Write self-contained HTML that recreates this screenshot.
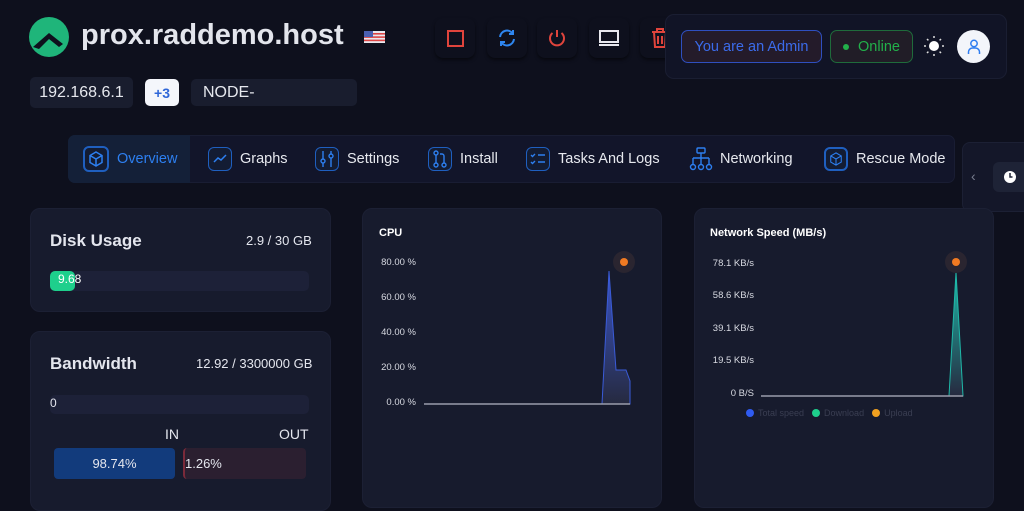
<!DOCTYPE html>
<html><head><meta charset="utf-8"><style>
*{box-sizing:border-box;margin:0;padding:0}
body{width:1024px;height:504px;overflow:hidden;background:#0e101d;font-family:"Liberation Sans",sans-serif;color:#e4e6ee;position:relative}
.abs{position:absolute}
.card{position:absolute;background:#171b2d;border-radius:10px;border:1px solid #1c2034}
.btn{position:absolute;top:18px;width:40px;height:40px;border-radius:8px;background:#0e101d;box-shadow:0 2px 3px rgba(0,0,0,.5);display:flex;align-items:center;justify-content:center}
.pill{position:absolute;border-radius:5px;background:#191d2e;font-size:16px;color:#e6e8ee;display:flex;align-items:center}
.tab{position:absolute;top:135px;height:48px;display:flex;align-items:center;font-size:14.5px;color:#e6e8ee}
.ic{width:24px;height:24px;border:1.5px solid #1f5fbf;border-radius:6px;margin-right:8px;display:flex;align-items:center;justify-content:center;background:#131c33}
.yl{position:absolute;font-size:9.5px;color:#d8dae2;text-align:right}
</style></head><body>
<svg class="abs" style="left:29px;top:17px" width="40" height="40" viewBox="0 0 40 40"><circle cx="20" cy="20" r="20" fill="#1fb57a"/><path d="M4 30 L20 16 L34 27 L30 30 L20 22 L10 32Z" fill="#0e101d"/></svg>
<div class="abs" style="left:81px;top:19px;font-size:29px;font-weight:bold;color:#e3e5ec">prox.raddemo.host</div>
<svg class="abs" style="left:364px;top:31px" width="21" height="12"><rect width="21" height="12" fill="#e8e8ee"/><rect y="2" width="21" height="1.6" fill="#d44"/><rect y="5.3" width="21" height="1.6" fill="#d44"/><rect y="8.6" width="21" height="1.6" fill="#d44"/><rect width="9" height="6" fill="#4a5fb0"/></svg>
<div class="btn" style="left:435px"><div style="width:17px;height:17px;border:2px solid #e0443c"></div></div>
<div class="btn" style="left:487px"><svg width="20" height="20" viewBox="0 0 20 20" fill="none" stroke="#2e86f0" stroke-width="2"><path d="M3 9a7 7 0 0 1 13-3M17 11a7 7 0 0 1-13 3"/><path d="M16 2v4h-4M4 18v-4h4"/></svg></div>
<div class="btn" style="left:537px"><svg width="20" height="20" viewBox="0 0 20 20" fill="none" stroke="#e0443c" stroke-width="2"><path d="M10 2v7"/><path d="M5.5 5a7 7 0 1 0 9 0"/></svg></div>
<div class="btn" style="left:589px"><svg width="22" height="20" viewBox="0 0 22 20" fill="none" stroke="#e8e8ee" stroke-width="2"><rect x="2" y="3" width="18" height="11"/><path d="M1 17h20"/></svg></div>
<div class="btn" style="left:640px"><svg width="20" height="22" viewBox="0 0 20 22" fill="none" stroke="#e0443c" stroke-width="2"><path d="M2 5h16M7 5V2h6v3M4 5l1 15h10l1-15M8 9v8M12 9v8"/></svg></div>
<div class="abs" style="left:665px;top:14px;width:342px;height:65px;background:#111426;border:1px solid #1a1e32;border-radius:9px"></div>
<div class="abs" style="left:681px;top:30px;width:141px;height:33px;border:1px solid #2f4fbf;border-radius:7px;background:#241b2a;color:#3b6bea;font-size:14.5px;display:flex;align-items:center;justify-content:center">You are an Admin</div>
<div class="abs" style="left:830px;top:30px;width:83px;height:33px;border:1px solid #1f6b3b;border-radius:7px;background:#211d27;color:#22b04a;font-size:14.5px;display:flex;align-items:center;justify-content:center"><span style="width:6px;height:6px;border-radius:3px;background:#22b04a;margin-right:9px"></span>Online</div>
<svg class="abs" style="left:924px;top:36px" width="20" height="20" viewBox="0 0 20 20"><circle cx="10" cy="10" r="5" fill="#fff"/><g stroke="#ddd" stroke-width="1.5"><path d="M10 0v2M10 18v2M0 10h2M18 10h2M3 3l1.4 1.4M15.6 15.6L17 17M3 17l1.4-1.4M15.6 4.4L17 3"/></g></svg>
<div class="abs" style="left:957px;top:30px;width:33px;height:33px;border-radius:50%;background:#f3f5fa;display:flex;align-items:center;justify-content:center"><svg width="14" height="16" viewBox="0 0 14 16" fill="none" stroke="#2e7df0" stroke-width="1.5"><circle cx="7" cy="4.5" r="3.2"/><path d="M1.5 15v-2a4 4 0 0 1 4-4h3a4 4 0 0 1 4 4v2"/></svg></div>
<div class="pill" style="left:30px;top:77px;width:103px;height:31px;justify-content:center">192.168.6.1</div>
<div class="pill" style="left:145px;top:79px;width:34px;height:27px;background:#f4f6fb;color:#2f66d8;font-weight:bold;font-size:14px;justify-content:center">+3</div>
<div class="pill" style="left:191px;top:79px;width:166px;height:27px;padding-left:12px">NODE-</div>
<div class="abs" style="left:68px;top:135px;width:887px;height:48px;background:#12152a;border:1px solid #191d33;border-radius:7px"></div>
<div class="abs" style="left:68px;top:135px;width:122px;height:48px;background:#142038;border-radius:7px 0 0 7px"></div>
<div class="tab" style="left:83px;color:#2d7ff0"><div class="ic" style="width:26px;height:26px;border-width:2px"><svg width="16" height="16" viewBox="0 0 16 16" fill="none" stroke="#2d7ff0" stroke-width="1.5"><path d="M8 1l6 3.5v7L8 15 2 11.5v-7z M2 4.5L8 8l6-3.5M8 8v7"/></svg></div>Overview</div>
<div class="tab" style="left:208px"><div class="ic"><svg width="14" height="10" viewBox="0 0 14 10" fill="none" stroke="#2d7ff0" stroke-width="1.5"><path d="M1 8l4-4 3 2 5-5"/></svg></div>Graphs</div>
<div class="tab" style="left:315px"><div class="ic"><svg width="16" height="18" viewBox="0 0 16 18" fill="none" stroke="#2d7ff0" stroke-width="1.4"><path d="M4 1v8M4 13v4M12 1v3M12 8v9"/><circle cx="4" cy="11" r="2"/><circle cx="12" cy="6" r="2"/></svg></div>Settings</div>
<div class="tab" style="left:428px"><div class="ic"><svg width="16" height="18" viewBox="0 0 16 18" fill="none" stroke="#2d7ff0" stroke-width="1.4"><circle cx="4" cy="3" r="2"/><circle cx="4" cy="15" r="2"/><circle cx="12" cy="15" r="2"/><path d="M4 5v8M12 13V6a2 2 0 0 0-2-2H8"/></svg></div>Install</div>
<div class="tab" style="left:526px"><div class="ic"><svg width="16" height="14" viewBox="0 0 16 14" fill="none" stroke="#2d7ff0" stroke-width="1.4"><path d="M1 3l1.5 1.5L5 2M8 3h7M1 10l1.5 1.5L5 9M8 10h7"/></svg></div>Tasks And Logs</div>
<div class="tab" style="left:689px"><svg width="24" height="24" viewBox="0 0 24 24" fill="none" stroke="#2d7ff0" stroke-width="1.4" style="margin-right:7px"><rect x="8" y="1" width="8" height="5" rx="1"/><path d="M12 6v5M4 11h16M4 11v6M12 11v6M20 11v6"/><circle cx="4" cy="20" r="2.5"/><circle cx="12" cy="20" r="2.5"/><circle cx="20" cy="20" r="2.5"/></svg>Networking</div>
<div class="tab" style="left:824px"><div class="ic" style="width:24px;height:24px;border-width:2px"><svg width="14" height="14" viewBox="0 0 16 16" fill="none" stroke="#2d7ff0" stroke-width="1.2"><path d="M8 1l6 3.5v7L8 15 2 11.5v-7z M2 4.5L8 8l6-3.5M8 8v7"/></svg></div>Rescue Mode</div>
<div class="abs" style="left:962px;top:142px;width:70px;height:70px;background:#141729;border:1px solid #1c2034;border-radius:8px 0 0 8px"></div>
<div class="abs" style="left:971px;top:168px;color:#7a7f90;font-size:14px">&lsaquo;</div>
<div class="abs" style="left:993px;top:162px;width:40px;height:30px;background:#1e2336;border-radius:6px"></div>
<svg class="abs" style="left:1003px;top:170px" width="14" height="14"><circle cx="7" cy="7" r="6" fill="#fff"/><path d="M7 3v4h2.5" stroke="#1e2336" stroke-width="1.5" fill="none"/></svg>
<div class="card" style="left:30px;top:208px;width:301px;height:104px"></div>
<div class="abs" style="left:50px;top:231px;font-size:17px;font-weight:bold">Disk Usage</div>
<div class="abs" style="left:246px;top:233px;font-size:13px">2.9 / 30 GB</div>
<div class="abs" style="left:50px;top:271px;width:259px;height:20px;background:#1d2138;border-radius:5px"></div>
<div class="abs" style="left:50px;top:271px;width:25px;height:20px;background:#1ecf8c;border-radius:5px"></div>
<div class="abs" style="left:58px;top:272px;font-size:12px;color:#fff">9.68</div>
<div class="card" style="left:30px;top:331px;width:301px;height:180px"></div>
<div class="abs" style="left:50px;top:354px;font-size:17px;font-weight:bold">Bandwidth</div>
<div class="abs" style="left:196px;top:356px;font-size:13px">12.92 / 3300000 GB</div>
<div class="abs" style="left:50px;top:395px;width:259px;height:19px;background:#1d2138;border-radius:5px"></div>
<div class="abs" style="left:50px;top:396px;font-size:12px">0</div>
<div class="abs" style="left:165px;top:426px;font-size:14px">IN</div>
<div class="abs" style="left:279px;top:426px;font-size:14px">OUT</div>
<div class="abs" style="left:54px;top:448px;width:121px;height:31px;background:#123b7c;border-radius:4px;font-size:13px;display:flex;align-items:center;justify-content:center">98.74%</div>
<div class="abs" style="left:183px;top:448px;width:123px;height:31px;background:#2b1f30;border-left:2px solid #7a2a3a;border-radius:4px;font-size:13px;display:flex;align-items:center">1.26%</div>
<div class="card" style="left:362px;top:208px;width:300px;height:300px"></div>
<div class="abs" style="left:379px;top:227px;font-size:11px;font-weight:bold;color:#fff">CPU</div>
<div class="yl" style="left:370px;top:257px;width:46px">80.00 %</div>
<div class="yl" style="left:370px;top:292px;width:46px">60.00 %</div>
<div class="yl" style="left:370px;top:327px;width:46px">40.00 %</div>
<div class="yl" style="left:370px;top:362px;width:46px">20.00 %</div>
<div class="yl" style="left:370px;top:397px;width:46px">0.00 %</div>
<svg class="abs" style="left:420px;top:250px" width="220" height="160"><defs><linearGradient id="g1" x1="0" y1="0" x2="0" y2="1"><stop offset="0" stop-color="#3a55c8"/><stop offset="1" stop-color="#262a40"/></linearGradient><linearGradient id="g2" x1="0" y1="0" x2="0" y2="1"><stop offset="0" stop-color="#1fb8a8"/><stop offset="1" stop-color="#262a40"/></linearGradient></defs>
<path d="M182 154 L189 21 L196 120 L206 120 L210 131 L210 154Z" fill="url(#g1)" stroke="#3a5bd8" stroke-width="1"/>
<line x1="4" y1="154" x2="210" y2="154" stroke="#9a9dab" stroke-width="1.5"/>
<circle cx="204" cy="12" r="11" fill="#2a2530"/><circle cx="204" cy="12" r="4" fill="#f07a22"/></svg>
<div class="card" style="left:694px;top:208px;width:300px;height:300px"></div>
<div class="abs" style="left:710px;top:227px;font-size:11px;font-weight:bold;color:#fff">Network Speed (MB/s)</div>
<div class="yl" style="left:700px;top:258px;width:54px">78.1 KB/s</div>
<div class="yl" style="left:700px;top:290px;width:54px">58.6 KB/s</div>
<div class="yl" style="left:700px;top:323px;width:54px">39.1 KB/s</div>
<div class="yl" style="left:700px;top:355px;width:54px">19.5 KB/s</div>
<div class="yl" style="left:700px;top:388px;width:54px">0 B/S</div>
<svg class="abs" style="left:755px;top:250px" width="220" height="150"><path d="M194 146 L201 22 L208 146Z" fill="url(#g2)" stroke="#1fb8a8" stroke-width="1"/>
<line x1="6" y1="146" x2="208" y2="146" stroke="#9a9dab" stroke-width="1.5"/>
<circle cx="201" cy="12" r="11" fill="#2a2530"/><circle cx="201" cy="12" r="4" fill="#f07a22"/></svg>
<div class="abs" style="left:746px;top:408px;font-size:9px;color:#3a3e52;display:flex;align-items:center;gap:4px"><span style="width:8px;height:8px;border-radius:4px;background:#2f5bf0"></span>Total speed <span style="width:8px;height:8px;border-radius:4px;background:#1ecf8c;margin-left:4px"></span>Download <span style="width:8px;height:8px;border-radius:4px;background:#f0a020;margin-left:4px"></span>Upload</div>
</body></html>
